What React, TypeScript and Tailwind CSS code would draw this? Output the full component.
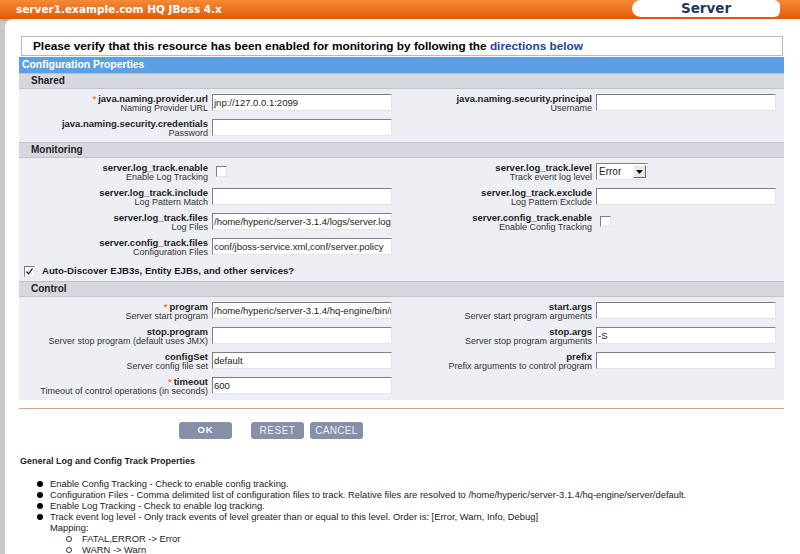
import type { ReactNode } from "react";

const grid = "grid grid-cols-[192px_185px_199px_189px]";

function TextBox({ value = "" }: { value?: string }) {
  return (
    <div className="ml-[1px] w-[180px] h-[17px] bg-white border border-t-[#808080] border-l-[#808080] border-r-[#e4e4e4] border-b-[#e4e4e4] text-[9.5px] leading-[15px] text-[#222] pl-[1px] overflow-hidden whitespace-nowrap">
      {value}
    </div>
  );
}

function CheckBox({ checked = false }: { checked?: boolean }) {
  return (
    <div className="w-[11px] h-[11px] bg-white border border-t-[#808080] border-l-[#808080] border-r-[#e4e4e4] border-b-[#e4e4e4] flex items-center justify-center">
      {checked && (
        <svg width="9" height="9" viewBox="0 0 9 9">
          <path d="M1.5 4.5 L3.5 6.8 L7.5 1.5" fill="none" stroke="#222" strokeWidth="1.3" />
        </svg>
      )}
    </div>
  );
}

function Select({ value }: { value: string }) {
  return (
    <div className="ml-[1px] w-[52px] h-[17px] bg-white border border-t-[#808080] border-l-[#808080] border-r-[#e4e4e4] border-b-[#e4e4e4] flex items-center justify-between text-[10px] text-[#222]">
      <span className="pl-[2px]">{value}</span>
      <div className="w-[13px] h-[13px] mr-[1px] bg-[#e8e8e8] border border-t-[#fafafa] border-l-[#fafafa] border-r-[#606060] border-b-[#606060] flex items-center justify-center">
        <svg width="7" height="4" viewBox="0 0 7 4">
          <path d="M0 0 H7 L3.5 4 Z" fill="#111" />
        </svg>
      </div>
    </div>
  );
}

function Label({ name, sub, required }: { name: string; sub: string; required?: boolean }) {
  return (
    <div className="text-right pr-[3px]">
      <div className="text-[9.5px] leading-[10px] font-bold text-[#1e1e1e] whitespace-nowrap">
        {required && <span className="text-[#ef7a3c] mr-[2px]">*</span>}
        {name}
      </div>
      <div className="text-[9px] leading-[9px] text-[#333] whitespace-nowrap">{sub}</div>
    </div>
  );
}

type Field = { name: string; sub: string; required?: boolean; control: ReactNode };

function Row({ left, right }: { left?: Field; right?: Field }) {
  return (
    <div className={`${grid} h-[25px] pt-[2px]`}>
      {left ? <Label name={left.name} sub={left.sub} required={left.required} /> : <div />}
      <div>{left?.control}</div>
      {right ? <Label name={right.name} sub={right.sub} required={right.required} /> : <div />}
      <div>{right?.control}</div>
    </div>
  );
}

function SectionHeader({ title }: { title: string }) {
  return (
    <div className="h-[16px] bg-[#d6d8de] border-y border-[#bfc2ca] pl-[12px] text-[10px] leading-[14px] font-bold text-[#1e1e1e]">
      {title}
    </div>
  );
}

const Check = () => (
  <div className="ml-[5px] mt-[3px]">
    <CheckBox />
  </div>
);

const Dot = () => (
  <span className="w-[13px] h-[11px] shrink-0 flex items-center">
    <span className="w-[6px] h-[6px] rounded-full bg-black" />
  </span>
);

const Ring = () => (
  <span className="w-[16px] h-[11px] shrink-0 flex items-center">
    <span className="w-[6px] h-[6px] rounded-full border border-[#333]" />
  </span>
);

export default function App() {
  return (
    <div className="w-[800px] h-[554px] overflow-hidden bg-[#c8c8c8] flex flex-col font-['Liberation_Sans',Arial,sans-serif]">
      {/* top bar */}
      <div className="h-[19px] shrink-0 bg-gradient-to-b from-[#f58a35] to-[#de5a02] flex items-start justify-between shadow-[0_1px_2px_rgba(0,0,0,0.25)]">
        <div className="pl-[16px] pt-[2px] text-white font-bold text-[10.5px] leading-[15px] font-['DejaVu_Sans',sans-serif]">
          server1.example.com HQ JBoss 4.x
        </div>
        <div className="mr-[20px] w-[148px] h-[17px] bg-white rounded-l-[9px] rounded-r-[6px] flex items-center justify-center text-[13.5px] font-bold text-[#1e3861] font-['DejaVu_Sans',sans-serif]">
          Server
        </div>
      </div>

      {/* body */}
      <div className="flex-1 ml-[5px] bg-white rounded-tl-[8px] pl-[14px] pr-[16px] pt-[17px]">
        <div className="ml-[2px] mr-[1px] h-[20px] border border-[#b8b8b8] pl-[11px] text-[11.8px] leading-[18px] font-bold text-black whitespace-nowrap">
          Please verify that this resource has been enabled for monitoring by following the{" "}
          <span className="text-[#23439b]">directions below</span>
        </div>

        <div className="mt-[1px] h-[16px] bg-[#5c9fe2] pl-[3px] text-[10.4px] leading-[16px] font-bold text-white">
          Configuration Properties
        </div>

        <div className="bg-[#edeff4]">
          <SectionHeader title="Shared" />
          <div className="pt-[3px]">
            <Row
              left={{ name: "java.naming.provider.url", sub: "Naming Provider URL", required: true, control: <TextBox value="jnp://127.0.0.1:2099" /> }}
              right={{ name: "java.naming.security.principal", sub: "Username", control: <TextBox /> }}
            />
            <Row left={{ name: "java.naming.security.credentials", sub: "Password", control: <TextBox /> }} />
          </div>

          <SectionHeader title="Monitoring" />
          <div className="pt-[3px]">
            <Row
              left={{ name: "server.log_track.enable", sub: "Enable Log Tracking", control: <Check /> }}
              right={{ name: "server.log_track.level", sub: "Track event log level", control: <Select value="Error" /> }}
            />
            <Row
              left={{ name: "server.log_track.include", sub: "Log Pattern Match", control: <TextBox /> }}
              right={{ name: "server.log_track.exclude", sub: "Log Pattern Exclude", control: <TextBox /> }}
            />
            <Row
              left={{ name: "server.log_track.files", sub: "Log Files", control: <TextBox value="/home/hyperic/server-3.1.4/logs/server.log" /> }}
              right={{ name: "server.config_track.enable", sub: "Enable Config Tracking", control: <Check /> }}
            />
            <Row
              left={{ name: "server.config_track.files", sub: "Configuration Files", control: <TextBox value="conf/jboss-service.xml,conf/server.policy" /> }}
            />
          </div>

          <div className="h-[20px] flex items-center pl-[5px] gap-[7px]">
            <CheckBox checked />
            <span className="text-[9.6px] font-bold text-[#1e1e1e]">
              Auto-Discover EJB3s, Entity EJBs, and other services?
            </span>
          </div>

          <SectionHeader title="Control" />
          <div className="pt-[3px]">
            <Row
              left={{ name: "program", sub: "Server start program", required: true, control: <TextBox value="/home/hyperic/server-3.1.4/hq-engine/bin/run.sh" /> }}
              right={{ name: "start.args", sub: "Server start program arguments", control: <TextBox /> }}
            />
            <Row
              left={{ name: "stop.program", sub: "Server stop program (default uses JMX)", control: <TextBox /> }}
              right={{ name: "stop.args", sub: "Server stop program arguments", control: <TextBox value="-S" /> }}
            />
            <Row
              left={{ name: "configSet", sub: "Server config file set", control: <TextBox value="default" /> }}
              right={{ name: "prefix", sub: "Prefix arguments to control program", control: <TextBox /> }}
            />
            <Row
              left={{ name: "timeout", sub: "Timeout of control operations (in seconds)", required: true, control: <TextBox value="600" /> }}
            />
          </div>
        </div>

        <div className="mt-[8px] h-px bg-[#dca682]" />

        <div className="mt-[13px] ml-[160px] flex items-center">
          <button className="w-[53px] h-[17px] rounded-[3px] bg-[#8790a9] text-white text-[9.5px] font-bold tracking-[1px]">OK</button>
          <button className="ml-[19px] w-[53px] h-[17px] rounded-[3px] bg-[#8790a9] text-[#eef0f6] text-[10px] tracking-[0.5px]">RESET</button>
          <button className="ml-[6px] w-[53px] h-[17px] rounded-[3px] bg-[#8790a9] text-[#eef0f6] text-[10px] tracking-[0.3px]">CANCEL</button>
        </div>

        <div className="mt-[17px] ml-px text-[9px] font-bold text-[#1e1e1e] leading-[11px]">
          General Log and Config Track Properties
        </div>

        <ul className="mt-[11px] ml-[18px] text-[9.4px] leading-[11px] text-[#222]">
          {[
            "Enable Config Tracking - Check to enable config tracking.",
            "Configuration Files - Comma delimited list of configuration files to track. Relative files are resolved to /home/hyperic/server-3.1.4/hq-engine/server/default.",
            "Enable Log Tracking - Check to enable log tracking.",
          ].map((t) => (
            <li key={t} className="flex">
              <Dot />
              <span>{t}</span>
            </li>
          ))}
          <li className="flex">
            <Dot />
            <div>
              <div>Track event log level - Only track events of level greater than or equal to this level. Order is: [Error, Warn, Info, Debug]</div>
              <div>Mapping:</div>
              <ul className="ml-[16px]">
                {["FATAL,ERROR -> Error", "WARN -> Warn", "INFO -> Info", "DEBUG -> Debug"].map((t) => (
                  <li key={t} className="flex">
                    <Ring />
                    <span>{t}</span>
                  </li>
                ))}
              </ul>
            </div>
          </li>
        </ul>
      </div>
    </div>
  );
}
